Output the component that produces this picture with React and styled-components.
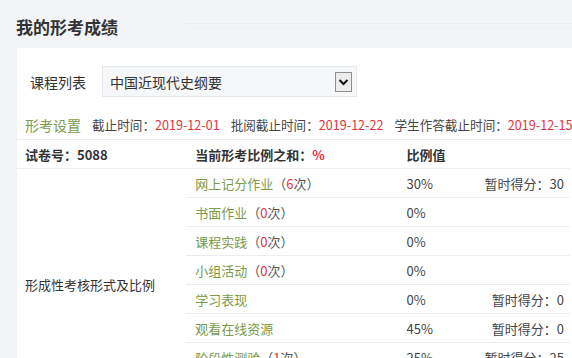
import styled, { createGlobalStyle } from "styled-components";

const Global = createGlobalStyle`
  html, body {
    margin: 0;
    padding: 0;
    background: #f3f4f7;
    overflow: hidden;
  }
  body {
    font-family: "Noto Sans CJK SC", "Noto Sans", "Liberation Sans", sans-serif;
    color: #333;
  }
`;

const Page = styled.div`
  width: 700px;
  padding-left: 17px;
`;

const Header = styled.div`
  height: 48px;
  display: flex;
  align-items: center;
`;

const Title = styled.h1`
  margin: 0 0 0 -1px;
  font-size: 17px;
  font-weight: bold;
  color: #333;
  line-height: 20px;
  padding-top: 6px;
`;

const HeaderLine = styled.div`
  flex: 1;
  margin-left: 67px;
  margin-top: 2px;
  height: 3px;
  border-top: 1px solid #ebecef;
  border-bottom: 1px solid #eff0f3;
`;

const Panel = styled.div`
  background: #fff;
  padding-top: 18px;
`;

const Filter = styled.div`
  display: flex;
  align-items: center;
  padding-left: 13px;
  height: 31px;
`;

const Label = styled.span`
  font-size: 14px;
  color: #333;
  width: 72px;
`;

const Select = styled.div`
  width: 255px;
  height: 31px;
  box-sizing: border-box;
  background: #f6f7f9;
  border: 1px solid #e6e7ea;
  display: flex;
  align-items: center;
  justify-content: space-between;
  padding: 0 4px 0 7px;
  font-size: 14px;
  color: #333;
`;

const Arrow = styled.span`
  width: 17px;
  height: 20px;
  box-sizing: border-box;
  border: 1px solid #8f8f8f;
  background: #ececec;
  display: flex;
  align-items: center;
  justify-content: center;
`;

const Settings = styled.div`
  display: flex;
  align-items: center;
  gap: 11px;
  height: 29px;
  padding-left: 8px;
  margin-top: 13px;
  border-bottom: 1px solid #ececec;
  font-size: 12.6px;
  white-space: nowrap;
`;

const SettingTitle = styled.span`
  font-size: 14px;
  color: #7b9a4b;
`;

const Field = styled.span`
  color: #444;
`;

const Red = styled.span`
  color: #e2333a;
`;

const Table = styled.table`
  border-collapse: collapse;
  font-size: 13px;
  width: 553px;
`;

const Th = styled.th`
  text-align: left;
  font-weight: bold;
  height: 28px;
  padding: 0 0 0 ${(p) => p.$pad || 9}px;
  border-bottom: 1px solid #ececec;
  color: #333;
  white-space: nowrap;
`;

const Td = styled.td`
  height: 28px;
  width: ${(p) => (p.$w ? `${p.$w}px` : "auto")};
  padding: 0 ${(p) => p.$right || 0}px 0 9px;
  border-bottom: 1px solid #ececec;
  text-align: ${(p) => p.$align || "left"};
  color: #444;
  white-space: nowrap;
`;

const SpanCell = styled.td`
  padding-left: 8px;
  color: #333;
  vertical-align: middle;
  width: 163px;
`;

const ItemName = styled.span`
  color: #7b9a4b;
`;

const Paren = styled.span`
  color: #555;
`;

const rows = [
  { name: "网上记分作业", count: 6, ratio: "30%", score: "30" },
  { name: "书面作业", count: 0, ratio: "0%" },
  { name: "课程实践", count: 0, ratio: "0%" },
  { name: "小组活动", count: 0, ratio: "0%" },
  { name: "学习表现", ratio: "0%", score: "0" },
  { name: "观看在线资源", ratio: "45%", score: "0" },
  { name: "阶段性测验", count: 1, ratio: "25%", score: "25" },
  { name: "专题讨论", count: 0, ratio: "0%" },
];

const Chevron = () => (
  <svg width="11" height="8" viewBox="0 0 11 8">
    <path d="M1.5 2 L5.5 6 L9.5 2" fill="none" stroke="#111" strokeWidth="2" />
  </svg>
);

export default function App() {
  return (
    <Page>
      <Global />
      <Header>
        <Title>我的形考成绩</Title>
        <HeaderLine />
      </Header>
      <Panel>
        <Filter>
          <Label>课程列表</Label>
          <Select>
            中国近现代史纲要
            <Arrow>
              <Chevron />
            </Arrow>
          </Select>
        </Filter>
        <Settings>
          <SettingTitle>形考设置</SettingTitle>
          <Field>
            截止时间：<Red>2019-12-01</Red>
          </Field>
          <Field>
            批阅截止时间：<Red>2019-12-22</Red>
          </Field>
          <Field>
            学生作答截止时间：<Red>2019-12-15</Red>
          </Field>
        </Settings>
        <Table>
          <thead>
            <tr>
              <Th $pad={8}>试卷号：5088</Th>
              <Th>
                当前形考比例之和：<Red>%</Red>
              </Th>
              <Th>比例值</Th>
              <Th />
            </tr>
          </thead>
          <tbody>
            {rows.map((r, i) => (
              <tr key={r.name}>
                {i === 0 && (
                  <SpanCell rowSpan={rows.length}>形成性考核形式及比例</SpanCell>
                )}
                <Td $w={205}>
                  <ItemName>{r.name}</ItemName>
                  {r.count !== undefined && (
                    <Paren>
                      （<Red>{r.count}</Red>次）
                    </Paren>
                  )}
                </Td>
                <Td $w={70}>{r.ratio}</Td>
                <Td $align="right" $right={6}>
                  {r.score !== undefined && `暂时得分：${r.score}`}
                </Td>
              </tr>
            ))}
          </tbody>
        </Table>
      </Panel>
    </Page>
  );
}
